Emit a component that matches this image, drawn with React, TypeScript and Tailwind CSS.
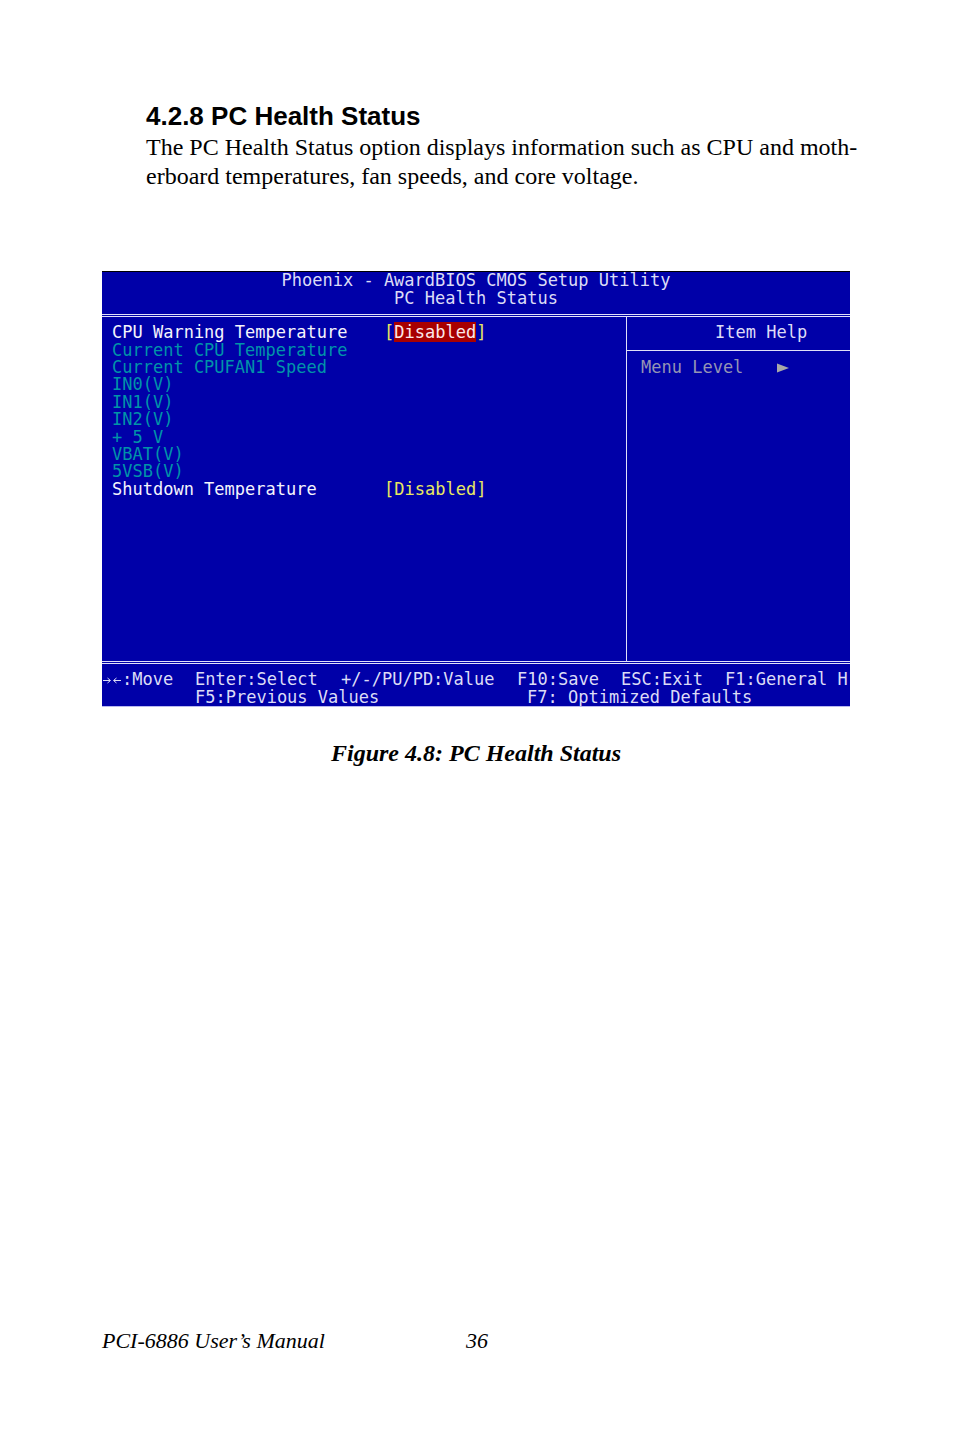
interface SetupItem {
  label: string;
  value?: string;
  selected?: boolean;
}

const items: SetupItem[] = [
  { label: 'CPU Warning Temperature', value: 'Disabled', selected: true },
  { label: 'Current CPU Temperature' },
  { label: 'Current CPUFAN1 Speed' },
  { label: 'IN0(V)' },
  { label: 'IN1(V)' },
  { label: 'IN2(V)' },
  { label: '+ 5 V' },
  { label: 'VBAT(V)' },
  { label: '5VSB(V)' },
  { label: 'Shutdown Temperature', value: 'Disabled' },
];

function ItemTable() {
  return (
    <table className="h-[174px] w-full table-fixed">
      <tbody>
        {items.map((item) => (
          <tr key={item.label}>
            <th
              scope="row"
              className={`w-[272px] p-0 text-left font-normal ${
                item.value ? 'text-[#f4f4fc]' : 'text-[#0094a8]'
              }`}
            >
              {item.label}
            </th>
            <td className="p-0 text-[#e8e860]">
              {item.value && (
                <button type="button" className="block">
                  [
                  <span className={item.selected ? 'bg-[#a80000] text-[#fce8e8]' : ''}>
                    {item.value}
                  </span>
                  ]
                </button>
              )}
            </td>
          </tr>
        ))}
      </tbody>
    </table>
  );
}

function BiosScreen() {
  return (
    <div className="overflow-hidden border-t border-b border-t-black border-b-[#b8b8f0] bg-[#0000a8] font-['DejaVu_Sans_Mono',monospace] text-[17px] leading-[17px] whitespace-pre text-[#dcdcf6]">
      <header className="flex h-[45px] flex-col items-center gap-px border-b-[3px] border-double border-[#e0e0f8]">
        <p>Phoenix - AwardBIOS CMOS Setup Utility</p>
        <p>PC Health Status</p>
      </header>

      <div className="grid h-[344px] grid-cols-[525fr_223fr]">
        <section className="border-r border-[#e0e0f8] pt-[7px] pl-[10px]">
          <ItemTable />
        </section>
        <aside>
          <h2 className="h-[34px] border-b border-[#e0e0f8] pt-[7px] pl-[88px]">Item Help</h2>
          <p className="flex items-center pt-2 pl-[14px] text-[#9494b4]">
            <span className="w-[136px]">Menu Level</span>
            <svg
              viewBox="0 0 12 10"
              className="h-[10px] w-3 fill-[#a8a8a8]"
              aria-hidden="true"
            >
              <path d="M0 0.5 12 5 0 9.5Z" />
            </svg>
          </p>
        </aside>
      </div>

      <footer className="flex flex-col gap-px border-t-[3px] border-double border-[#e0e0f8] pt-[7px]">
        <div className="grid grid-cols-[93fr_146fr_176fr_104fr_104fr_125fr]">
          <span className="flex items-center">
            <svg
              viewBox="0 0 20 10"
              className="h-[10px] w-5 fill-none stroke-current"
              aria-label="Left and right arrows"
            >
              <path d="M1 5.5H8M5.5 3L8.5 5.5L5.5 8M19 5.5H12M14.5 3L11.5 5.5L14.5 8" />
            </svg>
            :Move
          </span>
          <span>Enter:Select</span>
          <span>+/-/PU/PD:Value</span>
          <span>F10:Save</span>
          <span>ESC:Exit</span>
          <span>F1:General H</span>
        </div>
        <div className="grid grid-cols-[332fr_323fr] pl-[93px]">
          <span>F5:Previous Values</span>
          <span>F7: Optimized Defaults</span>
        </div>
      </footer>
    </div>
  );
}

export default function App() {
  return (
    <div className="flex min-h-screen flex-col bg-white pt-[100px] pr-[104px] pb-[75px] pl-[102px] font-['Liberation_Serif',serif] text-black">
      <main className="grow">
        <div className="-mr-4 pl-[44px]">
          <h1 className="mb-px font-['Liberation_Sans',sans-serif] text-[26px] leading-8 font-bold">
            4.2.8 PC Health Status
          </h1>
          <p className="text-[24px] leading-[29px]">
            The PC Health Status option displays information such as CPU and moth-
            <br />
            erboard temperatures, fan speeds, and core voltage.
          </p>
        </div>

        <figure className="mt-20">
          <BiosScreen />
          <figcaption className="mt-8 text-center text-[24px] leading-[29px] font-bold italic">
            Figure 4.8: PC Health Status
          </figcaption>
        </figure>
      </main>

      <footer className="flex text-[22px] leading-[29px] italic">
        <span className="w-[364px]">PCI-6886 User’s Manual</span>
        <span>36</span>
      </footer>
    </div>
  );
}
